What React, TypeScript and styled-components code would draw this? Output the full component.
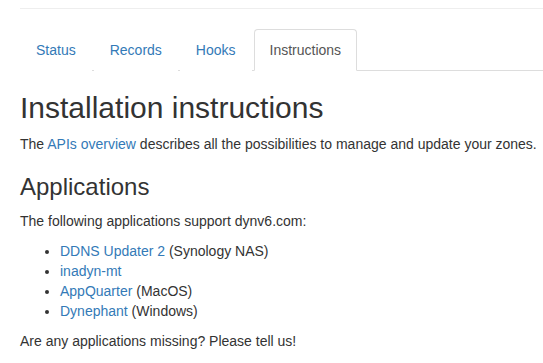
import styled, { createGlobalStyle } from "styled-components";

const GlobalStyle = createGlobalStyle`
  html, body {
    margin: 0;
    padding: 0;
    background: #fff;
  }
  body {
    font-family: "Liberation Sans", Arial, Helvetica, sans-serif;
    font-size: 14px;
    line-height: 20px;
    color: #333;
  }
`;

const tabs = ["Status", "Records", "Hooks", "Instructions"];

const apps = [
  { name: "DDNS Updater 2", note: "(Synology NAS)" },
  { name: "inadyn-mt", note: "" },
  { name: "AppQuarter", note: "(MacOS)" },
  { name: "Dynephant", note: "(Windows)" },
];

const App = () => {
  return (
    <>
      <GlobalStyle />
      <Page>
        <Rule />
        <TabBar>
          {tabs.map((t) => (
            <Tab key={t}>
              <TabLink href="#" $active={t === "Instructions"}>
                {t}
              </TabLink>
            </Tab>
          ))}
        </TabBar>

        <Title>Installation instructions</Title>
        <Text>
          The <Link href="#">APIs overview</Link> describes all the possibilities
          to manage and update your zones.
        </Text>

        <SubTitle>Applications</SubTitle>
        <Text>The following applications support dynv6.com:</Text>
        <AppList>
          {apps.map((a) => (
            <li key={a.name}>
              <Link href="#">{a.name}</Link>
              {a.note && " " + a.note}
            </li>
          ))}
        </AppList>
        <Text>Are any applications missing? Please tell us!</Text>
      </Page>
    </>
  );
};

export default App;

const Page = styled.div`
  padding: 8px 0 0 20px;
  white-space: nowrap;
`;

const Rule = styled.hr`
  margin: 0 0 20px;
  border: 0;
  border-top: 1px solid #eee;
`;

const TabBar = styled.ul`
  display: flex;
  margin: 0;
  padding: 0;
  list-style: none;
  border-bottom: 1px solid #ddd;
`;

const Tab = styled.li`
  margin-bottom: -1px;
`;

const TabLink = styled.a<{ $active?: boolean }>`
  display: block;
  padding: 10px 15px;
  margin-right: 2px;
  line-height: 20px;
  text-decoration: none;
  border: 1px solid transparent;
  border-radius: 4px 4px 0 0;
  color: ${(p) => (p.$active ? "#555" : "#337ab7")};
  background: #fff;
  ${(p) =>
    p.$active &&
    `
    border-color: #ddd #ddd transparent;
  `}
`;

const Title = styled.h1`
  margin: 20px 0 10px;
  font-size: 30px;
  font-weight: 500;
  line-height: 1.1;
`;

const SubTitle = styled.h2`
  margin: 20px 0 11px;
  font-size: 24px;
  font-weight: 500;
  line-height: 1.1;
`;

const Text = styled.p`
  margin: 0 0 10px;
`;

const Link = styled.a`
  color: #337ab7;
  text-decoration: none;
`;

const AppList = styled.ul`
  margin: 0 0 10px;
  padding-left: 40px;
`;
